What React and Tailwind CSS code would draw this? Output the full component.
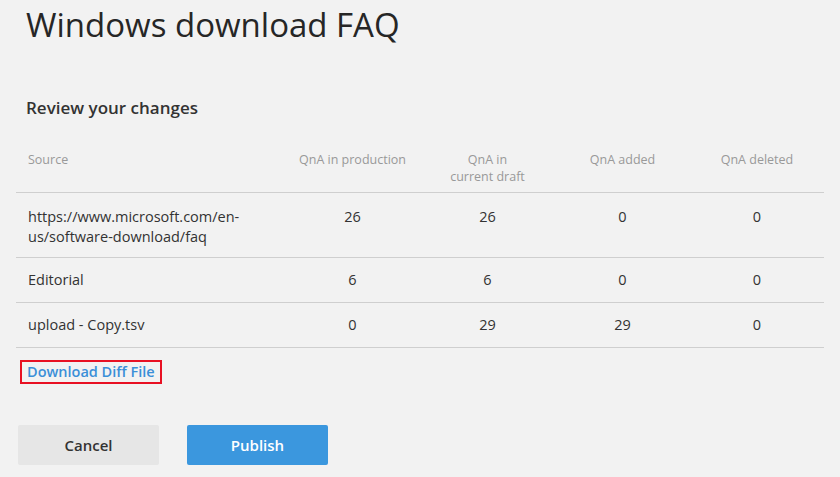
import React from "react";

const rows = [
  { source: "https://www.microsoft.com/en-us/software-download/faq", prod: 26, draft: 26, added: 0, deleted: 0, tall: true },
  { source: "Editorial", prod: 6, draft: 6, added: 0, deleted: 0 },
  { source: "upload - Copy.tsv", prod: 0, draft: 29, added: 29, deleted: 0 },
];

const App = () => {
  return (
    <div
      className="w-[840px] h-[477px] overflow-hidden bg-[#f2f2f2] text-[#333]"
      style={{ fontFamily: '"Segoe UI", "Open Sans", sans-serif' }}
    >
      <h1 className="pl-[26px] pt-[2px] text-[33px] leading-[46px] font-normal text-[#262626]">
        Windows download FAQ
      </h1>

      <h2 className="pl-[26px] mt-[48px] text-[17px] leading-[24px] font-semibold text-[#333]">
        Review your changes
      </h2>

      <div className="mx-[16px] mt-[31px] w-[808px]">
        <div className="grid grid-cols-[269px_135px_135px_135px_134px] border-b border-[#cfcfcf] pb-[7px] text-[12.5px] leading-[17px] text-[#999]">
          <div className="pl-[12px]">Source</div>
          <div className="text-center">QnA in production</div>
          <div className="text-center">
            QnA in
            <br />
            current draft
          </div>
          <div className="text-center">QnA added</div>
          <div className="text-center">QnA deleted</div>
        </div>

        {rows.map((r, i) => (
          <div
            key={i}
            className={`grid grid-cols-[269px_135px_135px_135px_134px] border-b border-[#cfcfcf] text-[14.5px] leading-[20px] ${
              r.tall ? "pt-[14px] pb-[10px]" : "pt-[12px] pb-[12px]"
            }`}
          >
            <div className="pl-[12px] pr-[16px]">{r.source}</div>
            <div className="text-center">{r.prod}</div>
            <div className="text-center">{r.draft}</div>
            <div className="text-center">{r.added}</div>
            <div className="text-center">{r.deleted}</div>
          </div>
        ))}
      </div>

      <div className="pl-[20px] mt-[11px]">
        <a
          href="#"
          className="inline-block border-2 border-[#e81123] px-[5px] py-[1px] text-[14.5px] leading-[18px] font-semibold text-[#3a8fd8]"
        >
          Download Diff File
        </a>
      </div>

      <div className="flex gap-[28px] pl-[18px] mt-[41px]">
        <button className="w-[141px] h-[40px] rounded-[2px] bg-[#e6e6e6] text-[15px] font-semibold text-[#333]">
          Cancel
        </button>
        <button className="w-[141px] h-[40px] rounded-[2px] bg-[#3b97de] text-[15px] font-semibold text-white">
          Publish
        </button>
      </div>
    </div>
  );
};

export default App;
